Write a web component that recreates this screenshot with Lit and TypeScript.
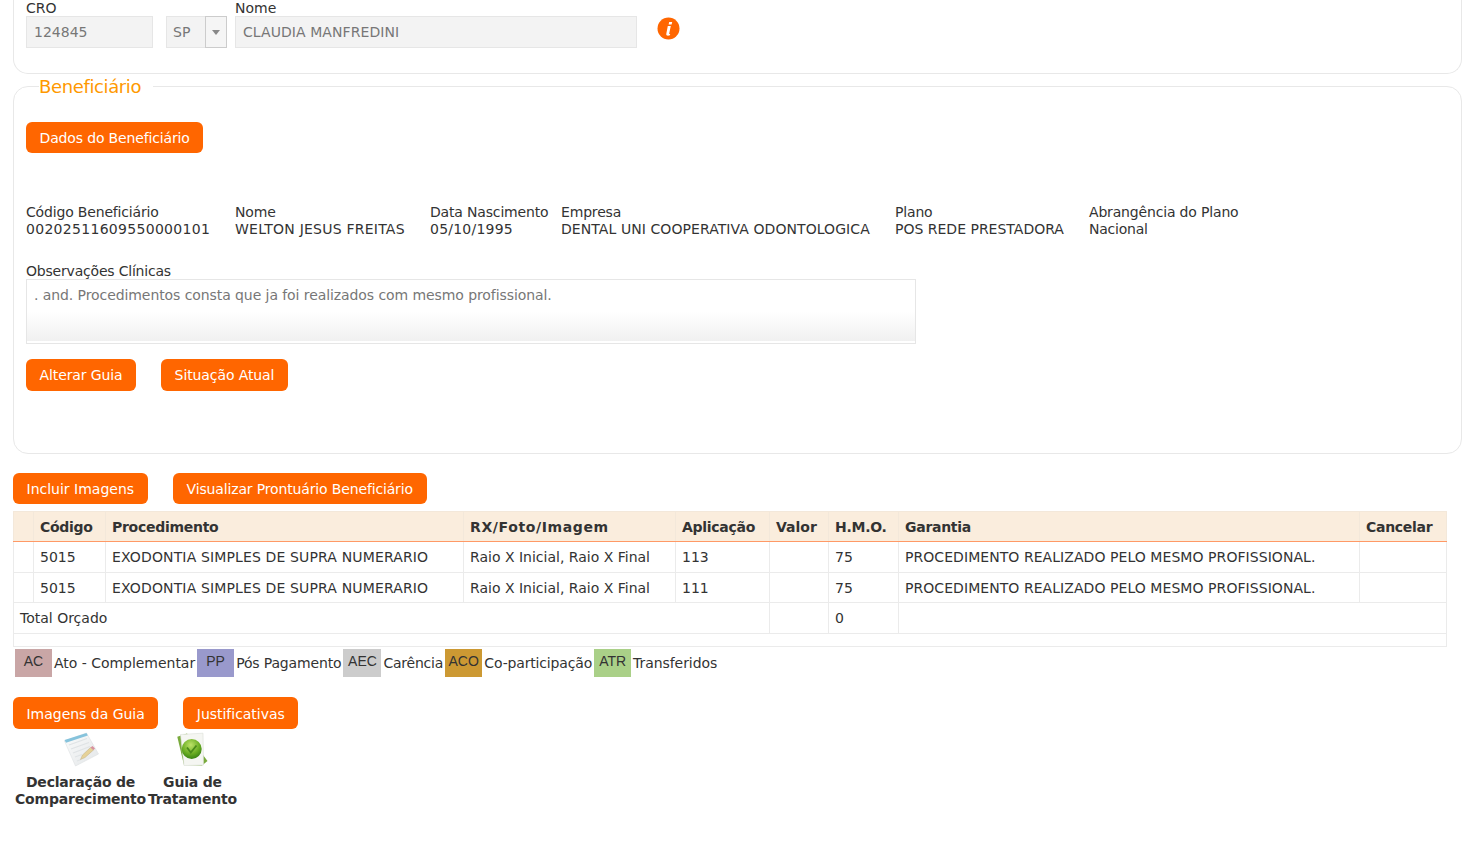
import { LitElement, html, css, svg } from "lit";
import { customElement } from "lit/decorators.js";

const PROC = "EXODONTIA SIMPLES DE SUPRA NUMERARIO";
const RX = "Raio X Inicial, Raio X Final";
const GAR = "PROCEDIMENTO REALIZADO PELO MESMO PROFISSIONAL.";
const rows = [
  ["5015", PROC, RX, "113", "", "75", GAR, ""],
  ["5015", PROC, RX, "111", "", "75", GAR, ""],
];
const legend = [
  ["AC", "Ato - Complementar", "ac", "faint"],
  ["PP", "Pós Pagamento", "pp", "tight"],
  ["AEC", "Carência", "aec", "tighter"],
  ["ACO", "Co-participação", "aco", "co"],
  ["ATR", "Transferidos", "atr", "slight"],
];
const info = [
  ["Código Beneficiário", "00202511609550000101", "digits"],
  ["Nome", "WELTON JESUS FREITAS", "wide"],
  ["Data Nascimento", "05/10/1995", "wide"],
  ["Empresa", "DENTAL UNI COOPERATIVA ODONTOLOGICA", "caps"],
  ["Plano", "POS REDE PRESTADORA", ""],
  ["Abrangência do Plano", "Nacional", "tighter"],
];
const heads = [
  ["", ""],
  ["Código", "h"],
  ["Procedimento", "h"],
  ["RX/Foto/Imagem", "hw"],
  ["Aplicação", "h"],
  ["Valor", ""],
  ["H.M.O.", "h"],
  ["Garantia", "h"],
  ["Cancelar", "h"],
];

const noteIcon = svg`<svg width="36" height="36" viewBox="0 0 36 36">
  <defs><linearGradient id="pg" x1="0" y1="0" x2="1" y2="1"><stop offset="0" stop-color="#fbfcfc"/><stop offset="1" stop-color="#e3e6e8"/></linearGradient></defs>
  <path d="M1.5 9 L23.5 1 L35.5 22 L12.5 34 Z" fill="url(#pg)" stroke="#dde0e2" stroke-width=".6"/>
  <path d="M1.5 8 L23.5 1 L24.8 3.4 L3 10.8 Z" fill="#86c3dc"/>
  <path d="M6 13 L24 6.5 M8 17 L26 10.5 M10 21 L27 14.5 M12 25 L19 22.5 M14 29 L18 27.5" stroke="#dfe3e5" stroke-width="1.3"/>
  <path d="M17.5 27.5 L19.5 23 L27.5 15.5 L30.5 18 L22 25.5 Z" fill="#e6d298" stroke="#bfae84" stroke-width=".5"/>
  <path d="M27.5 15.5 L29.5 14 L32 16.5 L30.5 18 Z" fill="#d9909e"/>
</svg>`;
const checkIcon = svg`<svg width="34" height="36" viewBox="0 0 34 36">
  <defs><radialGradient id="orb" cx=".45" cy=".3" r=".75"><stop offset="0" stop-color="#bde268"/><stop offset=".6" stop-color="#68ac22"/><stop offset="1" stop-color="#2f7a12"/></radialGradient></defs>
  <path d="M2.3 4.7 L12 1.5 L32.5 29 L27 33.5 L9 33 Z" fill="#79aa3c"/>
  <path d="M5.5 2.5 L28 1.2 L28.5 33 L9 33.5 Z" fill="#f5f6f2" stroke="#dcdfd8" stroke-width=".6"/>
  <circle cx="16.7" cy="17" r="10" fill="url(#orb)"/>
  <path d="M12 15.5 L15.8 20.5 L21.5 13.5" fill="none" stroke="#4a8a1a" stroke-width="1.8"/>
</svg>`;

@customElement("app-root")
export class AppRoot extends LitElement {
  static styles = css`
    :host { display: block; font-family: "DejaVu Sans", sans-serif; font-size: 14px; line-height: 17px; color: #333; padding: 0 9px 0 13px; background: #fff; min-height: 865px; box-sizing: border-box; }
    .faint { letter-spacing: -0.03px; }
    .slight { letter-spacing: -0.07px; }
    .tight { letter-spacing: -0.15px; }
    .co { letter-spacing: -0.16px; }
    .tighter { letter-spacing: -0.24px; }
    .caps { letter-spacing: 0.07px; }
    .wide { letter-spacing: 0.23px; }
    .digits { letter-spacing: 0.3px; }
    .top { height: 74px; box-sizing: border-box; border: 1px solid #e8e8e8; border-top: 0; border-radius: 0 0 15px 15px; padding: 0 0 0 12px; display: flex; align-items: flex-start; }
    .field { display: flex; flex-direction: column; }
    .field label { height: 16px; line-height: 16px; }
    .inp { height: 32px; box-sizing: border-box; background: #f3f3f3; border: 1px solid #e6e6e6; color: #777; line-height: 30px; padding: 0 7px; }
    .cro { width: 127px; margin-right: 13px; }
    .uf { width: 61px; margin-top: 16px; margin-right: 8px; display: flex; padding: 0 0 0 6px; }
    .uf span { flex: 1; }
    .arrow { width: 22px; box-sizing: border-box; flex: none; border: 1px solid #ccc; margin: -1px -1px -1px 0; display: flex; align-items: center; justify-content: center; background: #f5f5f5; }
    .arrow i { border: 4px solid transparent; border-top: 5px solid #888; border-bottom: 0; }
    .nome { width: 402px; }
    .infoicon { margin: 17px 0 0 20px; width: 23px; height: 23px; }
    fieldset { margin: 3px 0 0; padding: 0 12px; border: 1px solid #e8e8e8; border-radius: 15px; height: 377px; box-sizing: border-box; min-width: 0; }
    legend { margin-left: 13px; padding: 0 12px 0 0; font-size: 18px; line-height: 19px; color: #ff9900; letter-spacing: -0.37px; }
    .btn { display: inline-block; background: #ff6600; color: #fff; border-radius: 6px; height: 32px; line-height: 32px; padding: 0 13.5px; box-sizing: border-box; letter-spacing: -0.1px; }
    .btn.narrow { letter-spacing: -0.15px; }
    .btn.plain { letter-spacing: 0; }
    .btns { display: flex; }
    .b1 { margin-top: 26px; }
    .b1 .btn { height: 31px; line-height: 32px; }
    .info { display: grid; grid-template-columns: 209px 195px 131px 334px 194px auto; margin-top: 51px; }
    .info div { white-space: nowrap; }
    .lbl { letter-spacing: -0.17px; display: block; }
    .obs { margin-top: 25px; height: 16px; letter-spacing: -0.2px; }
    .ta { width: 890px; height: 65px; box-sizing: border-box; border: 1px solid #e6e6e6; padding: 7px; color: #777; line-height: 17px; letter-spacing: -0.08px; background: linear-gradient(#fff 50%, #f0f0f0 97%, #fff 97%); }
    .b2 { margin-top: 15px; gap: 25px; }
    .b3 { margin-top: 19px; gap: 25px; }
    .b3 .btn { height: 31px; }
    .b3 .narrow { padding: 0 14px; }
    table { margin-top: 7px; width: 1434px; border-collapse: collapse; table-layout: fixed; border: 1px solid #ebebeb; }
    th, td { border: 1px solid #ebebeb; padding: 1px 6px 0; text-align: left; white-space: nowrap; overflow: hidden; box-sizing: border-box; }
    th { background: #faeddd; height: 30px; border-color: #f3e8da; border-bottom: 1px solid #ff9966; font-weight: 700; }
    th.h { letter-spacing: -0.28px; }
    th.hw { letter-spacing: 0.62px; }
    tbody tr:first-child td { border-top: 1px solid #ff9966; }
    td { height: 31px; }
    tbody tr:nth-child(2) td { height: 30px; padding-top: 2px; }
    td.proc { letter-spacing: 0.14px; }
    td.gar { letter-spacing: 0.06px; }
    .empty td { height: 13px; padding: 0; }
    .legend { display: flex; align-items: center; margin: 2px 0 0 2px; height: 28px; }
    .sw { height: 28px; min-width: 37px; padding: 0 3.5px; box-sizing: border-box; line-height: 25px; text-align: center; margin-right: 2px; color: #333; font-family: "Liberation Sans", sans-serif; }
    .lt { margin-right: 2px; padding-top: 1px; }
    .ac { background: #c9a6a6; } .pp { background: #9999cc; } .aec { background: #cccccc; min-width: 38px; } .aco { background: #cc9933; } .atr { background: #aad088; }
    .b4 { margin-top: 20px; gap: 25px; }
    .b4 .btn { line-height: 34px; letter-spacing: -0.02px; }
    .docs { display: flex; margin-top: 3px; margin-left: 2px; gap: 2px; }
    .doc { display: flex; flex-direction: column; align-items: center; font-weight: 700; text-align: center; letter-spacing: -0.2px; }
    .doc svg { display: block; margin-bottom: 6px; }
  `;

  private cellClass(i: number) {
    return i === 1 ? "proc" : i === 6 ? "gar" : "";
  }

  render() {
    return html`
      <div class="top">
        <div class="field cro"><label>CRO</label><div class="inp">124845</div></div>
        <div class="inp uf"><span>SP</span><div class="arrow"><i></i></div></div>
        <div class="field nome"><label>Nome</label><div class="inp caps">CLAUDIA MANFREDINI</div></div>
        <svg class="infoicon" viewBox="0 0 23 23"><circle cx="11.5" cy="11.5" r="11" fill="#ff6600"/><path d="M12.2 5h3l-.6 2.6h-3zM10.8 9h3l-1.6 7.5c-.1.6.3.6 1 .4l-.3 1.4c-2 .7-4 .5-3.6-1.6z" fill="#fff"/></svg>
      </div>
      <fieldset>
        <legend>Beneficiário</legend>
        <div class="btns b1"><span class="btn narrow">Dados do Beneficiário</span></div>
        <div class="info">
          ${info.map(([a, b, c]) => html`<div><span class="lbl">${a}</span><span class=${c}>${b}</span></div>`)}
        </div>
        <div class="obs">Observações Clínicas</div>
        <div class="ta">. and. Procedimentos consta que ja foi realizados com mesmo profissional.</div>
        <div class="btns b2"><span class="btn">Alterar Guia</span><span class="btn">Situação Atual</span></div>
      </fieldset>
      <div class="btns b3"><span class="btn plain">Incluir Imagens</span><span class="btn narrow">Visualizar Prontuário Beneficiário</span></div>
      <table>
        <colgroup>
          ${[20, 72, 358, 212, 94, 59, 70, 461, 87].map((w) => html`<col style="width:${w}px" />`)}
        </colgroup>
        <thead>
          <tr>${heads.map(([h, c]) => html`<th class=${c}>${h}</th>`)}</tr>
        </thead>
        <tbody>
          ${rows.map((r) => html`<tr><td></td>${r.map((c, i) => html`<td class=${this.cellClass(i)}>${c}</td>`)}</tr>`)}
          <tr><td colspan="5">Total Orçado</td><td></td><td>0</td><td colspan="2"></td></tr>
          <tr class="empty"><td colspan="9"></td></tr>
        </tbody>
      </table>
      <div class="legend">
        ${legend.map(([s, t, c, l]) => html`<div class="sw ${c}">${s}</div><div class="lt ${l}">${t}</div>`)}
      </div>
      <div class="btns b4"><span class="btn">Imagens da Guia</span><span class="btn">Justificativas</span></div>
      <div class="docs">
        <div class="doc">${noteIcon}<div>Declaração de<br />Comparecimento</div></div>
        <div class="doc">${checkIcon}<div>Guia de<br />Tratamento</div></div>
      </div>
    `;
  }
}
